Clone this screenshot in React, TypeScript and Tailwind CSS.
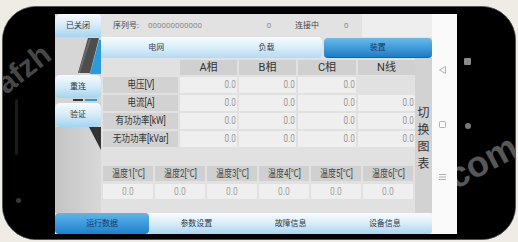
import React from "react";

const Label = ({ t }: { t: string }) => (
  <div className="bg-[#d2d2d2] flex items-center justify-center overflow-hidden">
    <span className="inline-block scale-x-[0.85] text-[10px] leading-none text-[#333] whitespace-nowrap">{t}</span>
  </div>
);

const Val = ({ t }: { t: string }) => (
  <div className="bg-[#efefef] flex items-center justify-end pr-[1px]">
    <span className="inline-block origin-right scale-x-[0.82] text-[10px] leading-none text-[#9a9a9a]">{t}</span>
  </div>
);

const Head = ({ t }: { t: string }) => (
  <div className="bg-[#d0d0d0] flex items-center justify-center">
    <span className="text-[11px] leading-none text-[#333]">{t}</span>
  </div>
);

function LeftBezel() {
  return (
    <div className="w-[52px] h-full relative overflow-hidden bg-black">
      <div className="absolute left-[12px] top-[92px] w-[3px] h-[56px] rounded-full bg-[#1b1b1b]" />
      <div className="absolute left-[13px] top-[191px] w-[5px] h-[5px] rounded-full bg-[#3a3a3a]" />
      <div className="absolute left-[6px] top-[62px] w-[70px] h-[30px] origin-bottom-left -rotate-38 text-[30px] font-bold leading-[30px] text-white/30 whitespace-nowrap font-['Liberation_Sans',sans-serif]">
        afzh
      </div>
    </div>
  );
}

function RightBezel() {
  return (
    <div className="w-[58px] h-full relative overflow-hidden bg-black">
      <div className="absolute left-[7px] top-[51px] w-[7px] h-[7px] rounded-[1px] bg-[#8a8a8a]" />
      <div className="absolute left-[8px] top-[116px] w-[6px] h-[6px] rounded-full bg-[#7a7a7a]" />
      <div className="absolute left-[1px] top-[152px] w-[80px] h-[36px] origin-bottom-left -rotate-28 text-[36px] font-bold leading-[36px] text-white/35 whitespace-nowrap font-['Liberation_Sans',sans-serif]">
        com
      </div>
    </div>
  );
}

function NavStrip() {
  return (
    <div className="w-[25px] h-full bg-[#fafafa] flex flex-col items-start pl-[7px] pt-[52px]">
      <svg width="7" height="8" viewBox="0 0 7 8">
        <polygon points="6.5,0.5 6.5,7.5 0.5,4" fill="none" stroke="#b0b0b0" strokeWidth="1" />
      </svg>
      <svg width="7" height="7" viewBox="0 0 7 7" className="mt-[47px]">
        <rect x="0.5" y="0.5" width="6" height="6" rx="1" fill="none" stroke="#b0b0b0" strokeWidth="1" />
      </svg>
      <svg width="7" height="6" viewBox="0 0 7 6" className="mt-[46px]">
        <line x1="0" y1="0.5" x2="7" y2="0.5" stroke="#b0b0b0" strokeWidth="1" />
        <line x1="0" y1="3" x2="7" y2="3" stroke="#b0b0b0" strokeWidth="1" />
        <line x1="0" y1="5.5" x2="7" y2="5.5" stroke="#b0b0b0" strokeWidth="1" />
      </svg>
    </div>
  );
}

const lightBtn =
  "bg-linear-to-b from-[#f6fbff] via-[#d3ebf9] to-[#a3d4f1] flex items-center justify-center text-[8px] text-[#333]";

function LeftCol() {
  return (
    <div className="w-[46px] h-full flex flex-col bg-[#d5d5d5]">
      <div className={`h-[23px] rounded-tl-[6px] rounded-tr-[3px] ${lightBtn}`}>已关闭</div>
      <svg width="46" height="38" viewBox="0 0 46 38" className="block">
        <rect width="46" height="38" fill="#d6d6d6" />
        <polygon points="44,3 46,3 46,37 35,37" fill="#2b9be0" />
        <polygon points="33,1 44,1 35,36 23,36" fill="#4d4d4d" />
        <polygon points="34,2 36,2 25,36 23,36" fill="#6a6a6a" />
      </svg>
      <div className={`h-[23px] rounded-[5px] ${lightBtn}`}>重连</div>
      <div className="h-[5px] relative">
        <div className="absolute left-[18px] top-[1px] w-[10px] h-[2px] bg-[#333]" />
        <div className="absolute left-[30px] top-[1px] w-[12px] h-[2px] bg-[#2b9be0]" />
      </div>
      <div className={`h-[24px] rounded-[5px] ${lightBtn}`}>验证</div>
      <div className="flex-1 bg-linear-to-r from-[#c4c4c4] to-[#d8d8d8] relative">
        <svg width="46" height="86" viewBox="0 0 46 86" className="block">
          <polygon points="34,0 46,0 46,23" fill="#333" />
        </svg>
      </div>
    </div>
  );
}

function Main() {
  const rows: [string, string[]][] = [
    ["电压[V]", ["0.0", "0.0", "0.0", ""]],
    ["电流[A]", ["0.0", "0.0", "0.0", "0.0"]],
    ["有功功率[kW]", ["0.0", "0.0", "0.0", "0.0"]],
    ["无功功率[kVar]", ["0.0", "0.0", "0.0", "0.0"]],
  ];
  const temps = ["温度1[℃]", "温度2[℃]", "温度3[℃]", "温度4[℃]", "温度5[℃]", "温度6[℃]"];
  return (
    <div className="w-[331px] h-full flex flex-col">
      <div className="h-[23px] flex text-[8px]">
        <div className="flex-1 bg-[#e2e2e2] flex items-center pl-[12px] whitespace-nowrap">
          <span className="w-[35px] text-[#444]">序列号:</span>
          <span className="w-[117px] text-[#8a8a8a]">000000000000</span>
          <span className="w-[8px] text-center text-[#8a8a8a]">0</span>
          <span className="ml-[22px] w-[49px] text-[#444]">连接中</span>
          <span className="text-[#8a8a8a]">0</span>
        </div>
        <div className="w-[70px] bg-[#eeeeee]" />
      </div>
      <div className="h-[21px] grid grid-cols-3 text-[8px] bg-[#e2e2e2]">
        <div className="bg-linear-to-b from-[#f6fbff] via-[#d9eefa] to-[#b3dbf3] flex items-center justify-center text-[#2d3e50]">电网</div>
        <div className="bg-linear-to-b from-[#f6fbff] via-[#d9eefa] to-[#b3dbf3] rounded-r-[4px] flex items-center justify-center text-[#2d3e50]">负载</div>
        <div className="ml-[2px] mt-[1px] rounded-[4px] bg-linear-to-b from-[#66bcec] to-[#1a7cc8] border-b border-[#16629e] flex items-center justify-center text-[#173a64]">装置</div>
      </div>
      <div className="h-[155px] flex bg-[#e1e1e1]">
        <div className="w-[314px] pl-[2px] pt-[2px] flex flex-col">
          <div className="grid grid-cols-[75px_57px_57px_58px_57px] grid-rows-[15px_16px_16px_16px_16px] gap-[2px]">
            <div />
            <Head t="A相" />
            <Head t="B相" />
            <Head t="C相" />
            <Head t="N线" />
            {rows.map(([l, vs]) => (
              <React.Fragment key={l}>
                <Label t={l} />
                {vs.map((v, i) => (v ? <Val key={i} t={v} /> : <div key={i} />))}
              </React.Fragment>
            ))}
          </div>
          <div className="mt-[19px] w-[310px] grid grid-cols-6 grid-rows-[15px_15px] gap-x-[2px] gap-y-[3px]">
            {temps.map((t) => (
              <div key={t} className="bg-[#d0d0d0] flex items-center justify-center overflow-hidden">
                <span className="inline-block scale-x-[0.8] text-[10px] leading-none text-[#444] whitespace-nowrap">{t}</span>
              </div>
            ))}
            {temps.map((t) => (
              <div key={t + "v"} className="bg-[#efefef] flex items-center justify-center">
                <span className="inline-block scale-x-[0.85] text-[10px] leading-none text-[#a5a5a5]">0.0</span>
              </div>
            ))}
          </div>
        </div>
        <div className="w-[17px] bg-[#d2d2d2] flex flex-col items-center pt-[47px] text-[12px] leading-[17px] text-[#333]">
          <span>切</span>
          <span>换</span>
          <span>图</span>
          <span>表</span>
        </div>
      </div>
    </div>
  );
}

function BottomTabs() {
  const light = "bg-linear-to-b from-[#f8fcff] via-[#d7edfa] to-[#a8d6f1] flex items-center justify-center text-[8px] text-[#2a3a4a]";
  return (
    <div className="h-[21px] grid grid-cols-4 bg-[#e8f3fa]">
      <div className="rounded-[4px] bg-linear-to-b from-[#5db6ec] to-[#1b80cc] flex items-center justify-center text-[8px] text-[#173a64]">运行数据</div>
      <div className={light}>参数设置</div>
      <div className={light}>故障信息</div>
      <div className={`${light} rounded-r-[4px]`}>设备信息</div>
    </div>
  );
}

function AppScreen() {
  return (
    <div className="w-[377px] h-full flex flex-col bg-[#e0e0e0]">
      <div className="h-[199px] flex">
        <LeftCol />
        <Main />
      </div>
      <BottomTabs />
    </div>
  );
}

export default function App() {
  return (
    <div className="w-[518px] h-[242px] bg-[#efece6] overflow-hidden font-['Roboto','Noto_Sans_CJK_SC',sans-serif]">
      <div className="ml-[2px] mt-[6px] w-[514px] h-[234px] rounded-[34px] bg-black border border-[#555] overflow-hidden flex">
        <LeftBezel />
        <div className="w-[402px] h-full flex flex-col">
          <div className="h-[7px] bg-black" />
          <div className="h-[220px] flex">
            <AppScreen />
            <NavStrip />
          </div>
          <div className="flex-1 bg-black" />
        </div>
        <RightBezel />
      </div>
    </div>
  );
}
